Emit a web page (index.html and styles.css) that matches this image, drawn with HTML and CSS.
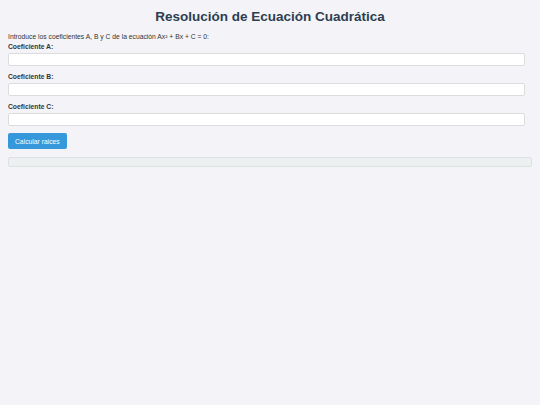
FILE: index.html
```html
<!DOCTYPE html>
<html lang="es">
<head>
<meta charset="utf-8">
<title>Resolución de Ecuación Cuadrática</title>
<link rel="stylesheet" href="styles.css">
</head>
<body>
<h1 class="title">Resolución de Ecuación Cuadrática</h1>
<p class="intro">Introduce los coeficientes A, B y C de la ecuación Ax² + Bx + C = 0:</p>
<div class="field">
  <label class="label" for="a">Coeficiente A:</label>
  <input class="input" id="a" type="text">
</div>
<div class="field">
  <label class="label" for="b">Coeficiente B:</label>
  <input class="input" id="b" type="text">
</div>
<div class="field">
  <label class="label" for="c">Coeficiente C:</label>
  <input class="input" id="c" type="text">
</div>
<button class="button" type="button">Calcular raices</button>
<div class="result"></div>
</body>
</html>
```
FILE: styles.css
```css
html, body {
  background: #f4f4f8;
}
body {
  margin: 8px;
  font-family: "Liberation Sans", Arial, sans-serif;
  color: #333;
}
.title {
  margin: 0;
  text-align: center;
  font-size: 13.5px;
  line-height: 17px;
  color: #2c3e50;
}
.intro {
  margin: 8px 0 2px;
  font-size: 6.75px;
  line-height: 8px;
  color: #333;
}
.field {
  display: flex;
  flex-direction: column;
  align-items: flex-start;
  margin-bottom: 7px;
}
.label {
  font-size: 6.75px;
  line-height: 8px;
  font-weight: bold;
  color: #333;
}
.input {
  box-sizing: border-box;
  width: 517px;
  height: 13px;
  margin: 2px 0 0;
  padding: 0 3px;
  border: 1px solid #dcdcdc;
  border-radius: 2px;
  background: #fff;
  font-size: 7px;
}
.button {
  display: block;
  height: 16px;
  margin: 0;
  padding: 0 7px;
  border: 0;
  border-radius: 2px;
  background: #3498db;
  color: #fff;
  font-family: "Liberation Sans", Arial, sans-serif;
  font-size: 6.75px;
}
.result {
  box-sizing: border-box;
  height: 10px;
  margin-top: 8px;
  border: 1px solid #dde1e3;
  border-radius: 2px;
  background: #ecf0f1;
}
```
